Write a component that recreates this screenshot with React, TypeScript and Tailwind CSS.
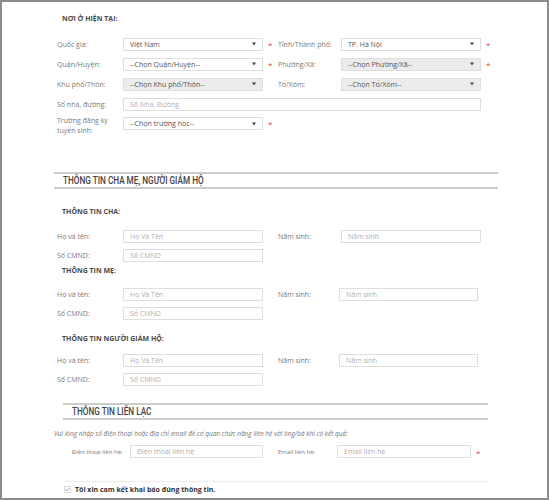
import React from 'react';

type BoxProps = {
  value?: string;
  placeholder?: string;
  select?: boolean;
  disabled?: boolean;
  className?: string;
};

// dropdown caret used by every select box
function Caret() {
  return (
    <svg width="4" height="4" viewBox="0 0 4 4" className="ml-auto shrink-0">
      <polygon points="0,0.5 4,0.5 2,3.5" fill="#444" />
    </svg>
  );
}

function Box({ value, placeholder, select, disabled, className = '' }: BoxProps) {
  return (
    <div
      className={`h-[13px] shrink-0 border border-[#dedede] flex items-center pl-[6px] pr-[6px] text-[7px] leading-none ${
        disabled ? 'bg-[#ececec]' : 'bg-white'
      } ${className}`}
    >
      {value ? (
        <span className="text-[#555]">{value}</span>
      ) : (
        <span className="text-[#b0b0b0]">{placeholder}</span>
      )}
      {select && <Caret />}
    </div>
  );
}

function Star({ className = '' }: { className?: string }) {
  return <span className={`text-[#e2413b] text-[8px] leading-none ${className}`}>*</span>;
}

function Label({ children, className = '' }: { children: React.ReactNode; className?: string }) {
  return <div className={`shrink-0 whitespace-nowrap text-[#7a7a7a] ${className}`}>{children}</div>;
}

function SubTitle({ children, className = '' }: { children: React.ReactNode; className?: string }) {
  return (
    <div className={`ml-[5px] h-[10px] flex items-center text-[7px] font-bold text-[#4a4a4a] uppercase leading-none ${className}`}>
      {children}
    </div>
  );
}

// section header with double rule, condensed caps
function SectionHead({ children, className = '' }: { children: React.ReactNode; className?: string }) {
  return (
    <div className={`border-y-2 border-[#cccccc] h-[17px] flex items-center pl-[9px] ${className}`}>
      <span className="inline-block origin-left scale-x-[0.82] whitespace-nowrap font-['Roboto',sans-serif] font-medium text-[10px] text-[#444] leading-none">
        {children}
      </span>
    </div>
  );
}

function PersonRows({ rightLabel = 'w-[63px]', rightBox = 'w-[140px]' }: { rightLabel?: string; rightBox?: string }) {
  return (
    <>
      <div className="h-[19px] flex items-center">
        <Label className="w-[66px] text-[7px] leading-none">Họ và tên:</Label>
        <Box placeholder="Họ Và Tên" className="w-[140px]" />
        <div className="w-[15px]" />
        <Label className={`${rightLabel} text-[7px] leading-none`}>Năm sinh:</Label>
        <Box placeholder="Năm sinh" className={rightBox} />
      </div>
      <div className="h-[19px] flex items-center">
        <Label className="w-[66px] text-[7px] leading-none">Số CMND:</Label>
        <Box placeholder="Số CMND" className="w-[140px]" />
      </div>
    </>
  );
}

export default function App() {
  return (
    <div className="w-[549px] h-[500px] border-2 border-[#8c8c8c] bg-white overflow-hidden font-['Open_Sans',sans-serif]">
      <div className="pl-[55px] pt-[10px]">
        {/* --- NƠI Ở HIỆN TẠI --- */}
        <SubTitle className="h-[12px]">Nơi ở hiện tại:</SubTitle>

        <div className="mt-[10px]">
          <div className="h-[20px] flex items-center">
            <Label className="w-[66px] text-[7px] leading-none">Quốc gia:</Label>
            <Box value="Việt Nam" select className="w-[140px]" />
            <div className="w-[15px] pl-[5px] pt-[2px] flex"><Star /></div>
            <Label className="w-[63px] text-[7px] leading-none">Tỉnh/Thành phố:</Label>
            <Box value="TP. Hà Nội" select className="w-[140px]" />
            <Star className="ml-[5px] pt-[2px]" />
          </div>
          <div className="h-[20px] flex items-center">
            <Label className="w-[66px] text-[7px] leading-none">Quận/Huyện:</Label>
            <Box value="--Chọn Quận/Huyện--" select className="w-[140px]" />
            <div className="w-[15px] pl-[5px] pt-[2px] flex"><Star /></div>
            <Label className="w-[63px] text-[7px] leading-none">Phường/Xã:</Label>
            <Box value="--Chọn Phường/Xã--" select disabled className="w-[140px]" />
            <Star className="ml-[5px] pt-[2px]" />
          </div>
          <div className="h-[20px] flex items-center">
            <Label className="w-[66px] text-[7px] leading-none">Khu phố/Thôn:</Label>
            <Box value="--Chọn Khu phố/Thôn--" select disabled className="w-[140px]" />
            <div className="w-[15px]" />
            <Label className="w-[63px] text-[7px] leading-none">Tổ/Xóm:</Label>
            <Box value="--Chọn Tổ/Xóm--" select disabled className="w-[140px]" />
          </div>
          <div className="h-[20px] flex items-center">
            <Label className="w-[66px] text-[7px] leading-none">Số nhà, đường:</Label>
            <Box placeholder="Số Nhà, Đường" className="w-[358px]" />
          </div>
          <div className="h-[20px] flex items-start">
            <Label className="w-[66px] mt-[2px] text-[7px] leading-[10px]">
              Trường đăng ký
              <br />
              tuyển sinh:
            </Label>
            <Box value="--Chọn trường học--" select className="w-[140px] mt-[3px]" />
            <div className="w-[15px] pl-[5px] mt-[6px] flex"><Star /></div>
          </div>
        </div>

        {/* --- THÔNG TIN CHA MẸ, NGƯỜI GIÁM HỘ --- */}
        <SectionHead className="mt-[38px] -ml-[3px] w-[444px]">THÔNG TIN CHA MẸ, NGƯỜI GIÁM HỘ</SectionHead>

        <SubTitle className="mt-[16px] h-[12px]">Thông tin cha:</SubTitle>
        <div className="mt-[10px]">
          <PersonRows />
        </div>

        <SubTitle>Thông tin mẹ:</SubTitle>
        <div className="mt-[10px]">
          <PersonRows rightLabel="w-[61px]" rightBox="w-[139px]" />
        </div>

        <SubTitle className="mt-[10px]">Thông tin người giám hộ:</SubTitle>
        <div className="mt-[8px]">
          <PersonRows rightLabel="w-[61px]" rightBox="w-[139px]" />
        </div>

        {/* --- THÔNG TIN LIÊN LẠC --- */}
        <SectionHead className="mt-[14px] ml-[6px] w-[425px]">THÔNG TIN LIÊN LẠC</SectionHead>

        <div className="mt-[9px] -ml-[3px] h-[10px] flex items-center text-[6.5px] italic text-[#777] leading-none whitespace-nowrap">
          Vui lòng nhập số điện thoại hoặc địa chỉ email để cơ quan chức năng liên hệ với ông/bà khi có kết quả:
        </div>

        <div className="mt-[3px] ml-[15px] h-[19px] flex items-center">
          <Label className="w-[58px] text-[6px] leading-none">Điện thoại liên hệ:</Label>
          <Box placeholder="Điện thoại liên hệ" className="w-[133px]" />
          <div className="w-[15px]" />
          <Label className="w-[59px] text-[6px] leading-none">Email liên hệ:</Label>
          <Box placeholder="Email liên hệ" className="w-[134px]" />
          <Star className="ml-[5px] pt-[2px]" />
        </div>

        <div className="mt-[20px] ml-[6px] w-[425px] border-t border-[#ececec]" />

        <div className="mt-[1px] ml-[7px] h-[12px] flex items-center gap-[4px]">
          <svg width="7" height="7" viewBox="0 0 7 7" className="shrink-0">
            <rect x="0.5" y="0.5" width="6" height="6" fill="#fff" stroke="#d8d8d8" />
            <polyline points="1.6,3.6 2.9,4.9 5.4,2" fill="none" stroke="#9a9a9a" strokeWidth="1" />
          </svg>
          <span className="text-[7px] font-bold text-[#333] leading-none whitespace-nowrap">
            Tôi xin cam kết khai báo đúng thông tin.
          </span>
        </div>
      </div>
    </div>
  );
}
